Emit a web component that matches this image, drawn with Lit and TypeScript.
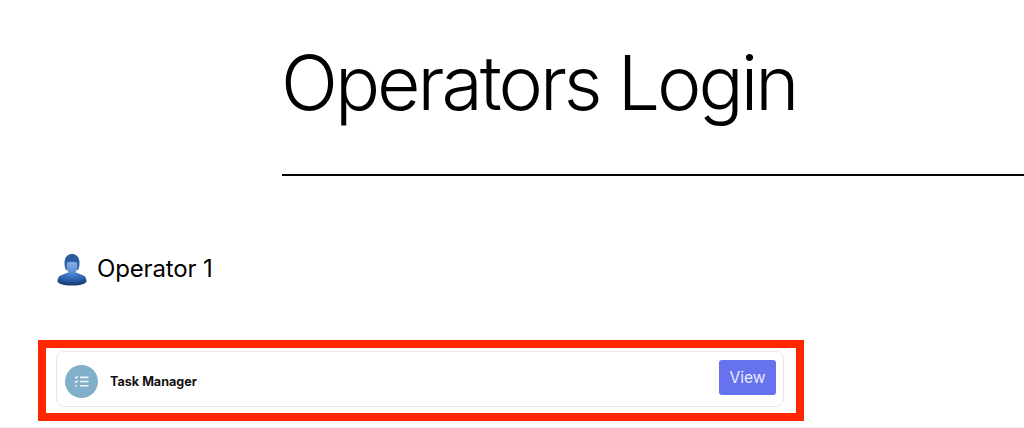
import { LitElement, html, css } from "lit";
import { customElement } from "lit/decorators.js";

@customElement("app-root")
export class AppRoot extends LitElement {
  static styles = css`
    :host { display: block; width: 1024px; height: 428px; overflow: hidden; background: #fff; font-family: Inter, "Liberation Sans", sans-serif; color: #000; box-sizing: border-box; border-bottom: 1px solid #eeeeee; }
    .head { margin-left: 282px; height: 176px; box-sizing: border-box; border-bottom: 2px solid #000; padding-top: 37px; }
    h1 { margin: 0 0 0 -1px; font-size: 75px; line-height: 92px; font-weight: 330; letter-spacing: -3px; white-space: nowrap; }
    .op { display: flex; align-items: center; gap: 10px; margin: 74px 0 0 57px; height: 36px; font-size: 24px; font-weight: 400; letter-spacing: -0.15px; }
    .op svg { width: 30px; height: 32px; flex: none; margin-top: 3px; }
    .frame { margin: 54px 0 0 38px; width: 766px; height: 81px; box-sizing: border-box; border: 8px solid #ff2600; padding: 3px 12px 6px 10px; }
    .card { height: 56px; box-sizing: border-box; border: 1px solid #e8e8ea; border-radius: 8px; display: flex; align-items: flex-start; justify-content: space-between; padding: 8px 7px 0 8px; }
    .task { display: flex; align-items: center; gap: 12px; margin-top: 5px; }
    .badge { width: 33px; height: 33px; border-radius: 50%; background: #82b0cb; display: flex; align-items: center; justify-content: center; flex: none; }
    .badge svg { width: 15px; height: 15px; }
    .name { font-size: 12.6px; font-weight: 700; color: #111; }
    .view { width: 57px; height: 35px; background: #6772ef; border-radius: 3px; color: #e9ebfd; font-size: 15.5px; font-weight: 400; display: flex; align-items: center; justify-content: center; }
  `;

  render() {
    return html`
      <div class="head"><h1>Operators Login</h1></div>
      <div class="op">
        <svg viewBox="0 0 30 32" aria-hidden="true">
          <defs>
            <radialGradient id="b" cx="0.5" cy="0.1" r="0.85"><stop offset="0" stop-color="#4a86d6"/><stop offset="0.6" stop-color="#2b5ea6"/><stop offset="1" stop-color="#1a3a72"/></radialGradient>
            <linearGradient id="f" x1="0" y1="0" x2="0" y2="1"><stop offset="0" stop-color="#8ab0e6"/><stop offset="1" stop-color="#4f83cc"/></linearGradient>
          </defs>
          <path d="M0.500 27c0-3.500 2-5.500 5.500-6.500l5-2h8l5 2c3.500 1 5.500 3 5.500 6.500 0 2.500-5 4.500-14.500 4.500S0.500 29.500 0.500 27z" fill="url(#b)"/>
          <path d="M7.500 9c0-6 3.500-9 7.500-9s7.500 3 7.500 9c0 3-.5 5-1.500 7H9c-1-2-1.500-4-1.500-7z" fill="#2a5c9f"/>
          <path d="M10 8.500c3-1 7-1 10 0 .5 2 .5 4 0 6.500-.7 3-3 5.500-5 5.500s-4.300-2.500-5-5.500c-.5-2.500-.5-4.500 0-6.500z" fill="url(#f)"/>
        </svg>
        <span>Operator 1</span>
      </div>
      <div class="frame">
        <div class="card">
          <div class="task">
            <div class="badge">
              <svg viewBox="0 0 16 16" fill="none" stroke="#eef4f8" stroke-width="1.800" aria-hidden="true">
                <path d="M6.500 3.500H15.500M6.500 8H15.500M6.500 12.500H15.500"/>
                <path d="M1 3.200l1.200 1.200L4 2.400M1 7.700l1.200 1.200L4 6.900" stroke-width="1.300"/>
                <circle cx="2.400" cy="12.500" r="1.100" fill="#eef4f8" stroke="none"/>
              </svg>
            </div>
            <span class="name">Task Manager</span>
          </div>
          <div class="view">View</div>
        </div>
      </div>
    `;
  }
}
